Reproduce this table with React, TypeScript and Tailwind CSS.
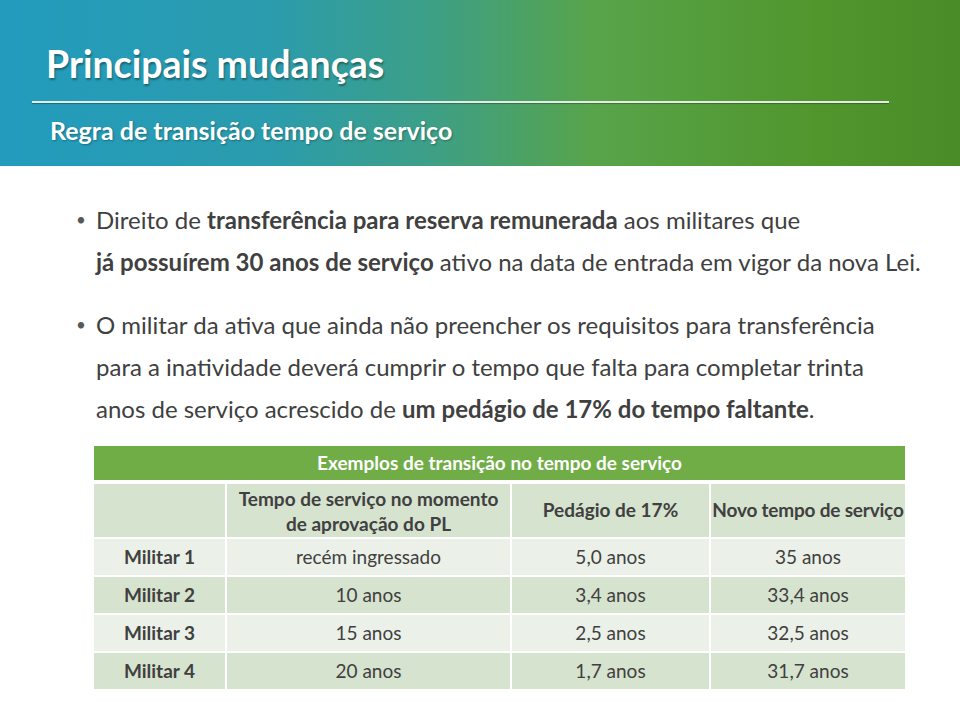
const rows = [
  { name: "Militar 1", tempo: "recém ingressado", pedagio: "5,0 anos", novo: "35 anos" },
  { name: "Militar 2", tempo: "10 anos", pedagio: "3,4 anos", novo: "33,4 anos" },
  { name: "Militar 3", tempo: "15 anos", pedagio: "2,5 anos", novo: "32,5 anos" },
  { name: "Militar 4", tempo: "20 anos", pedagio: "1,7 anos", novo: "31,7 anos" },
];

const App = () => {
  return (
    <div className="w-[960px] h-[720px] bg-white font-['Lato',sans-serif] overflow-hidden">
      {/* Header band */}
      <div className="h-[166px] pt-[41px] bg-[linear-gradient(90deg,#229bbd_0%,#2b9cad_28%,#3d9f86_45%,#58a44a_62%,#51962d_85%,#4a8c28_100%)]">
        <div className="pl-[46px] text-[37.5px] font-bold text-white leading-[46px] [text-shadow:1px_2px_2px_rgba(0,0,0,0.35)]">
          Principais mudanças
        </div>
        <div className="ml-[32px] mt-[14px] w-[857px] h-[2px] bg-[#e4ece6] shadow-[0_1px_1px_rgba(0,0,0,0.3)]" />
        <div className="pl-[50px] mt-[11px] text-[25px] font-bold text-white leading-[32px] [text-shadow:1px_1px_2px_rgba(0,0,0,0.3)]">
          Regra de transição tempo de serviço
        </div>
      </div>

      {/* Bullets */}
      <div className="pl-[76px] pt-[33px] text-[24px] leading-[42px] text-[#404040]">
        <div className="flex">
          <span className="w-[20px] shrink-0 text-[17px] text-[#595959]">•</span>
          <div>
            Direito de <b>transferência para reserva remunerada</b> aos militares que
            <br />
            <b>já possuírem 30 anos de serviço</b> ativo na data de entrada em vigor da nova Lei.
          </div>
        </div>
        <div className="flex mt-[21px]">
          <span className="w-[20px] shrink-0 text-[17px] text-[#595959]">•</span>
          <div>
            O militar da ativa que ainda não preencher os requisitos para transferência
            <br />
            para a inatividade deverá cumprir o tempo que falta para completar trinta
            <br />
            anos de serviço acrescido de <b>um pedágio de 17% do tempo faltante</b>.
          </div>
        </div>
      </div>

      {/* Table */}
      <div className="ml-[94px] mt-[16px] w-[811px] text-[19px] text-[#404040]">
        <div className="h-[34px] bg-[#70ad47] flex items-center justify-center font-bold text-white">
          Exemplos de transição no tempo de serviço
        </div>
        <div className="mt-[4px] grid grid-cols-[131px_283px_197px_194px] gap-[2px]">
          <div className="h-[53px] bg-[#d6e3cf]" />
          <div className="h-[53px] bg-[#d6e3cf] flex items-center justify-center text-center font-bold leading-[25px]">
            Tempo de serviço no momento
            <br />
            de aprovação do PL
          </div>
          <div className="h-[53px] bg-[#d6e3cf] flex items-center justify-center font-bold">
            Pedágio de 17%
          </div>
          <div className="h-[53px] bg-[#d6e3cf] flex items-center justify-center font-bold whitespace-nowrap tracking-[-0.2px]">
            Novo tempo de serviço
          </div>
          {rows.map((r, i) => {
            const bg = i % 2 === 0 ? "bg-[#ebf1e8]" : "bg-[#d6e3cf]";
            return [
              <div key={r.name + "a"} className={`h-[36px] ${bg} flex items-center justify-center font-bold`}>
                {r.name}
              </div>,
              <div key={r.name + "b"} className={`h-[36px] ${bg} flex items-center justify-center`}>
                {r.tempo}
              </div>,
              <div key={r.name + "c"} className={`h-[36px] ${bg} flex items-center justify-center`}>
                {r.pedagio}
              </div>,
              <div key={r.name + "d"} className={`h-[36px] ${bg} flex items-center justify-center`}>
                {r.novo}
              </div>,
            ];
          })}
        </div>
      </div>
    </div>
  );
};

export default App;
